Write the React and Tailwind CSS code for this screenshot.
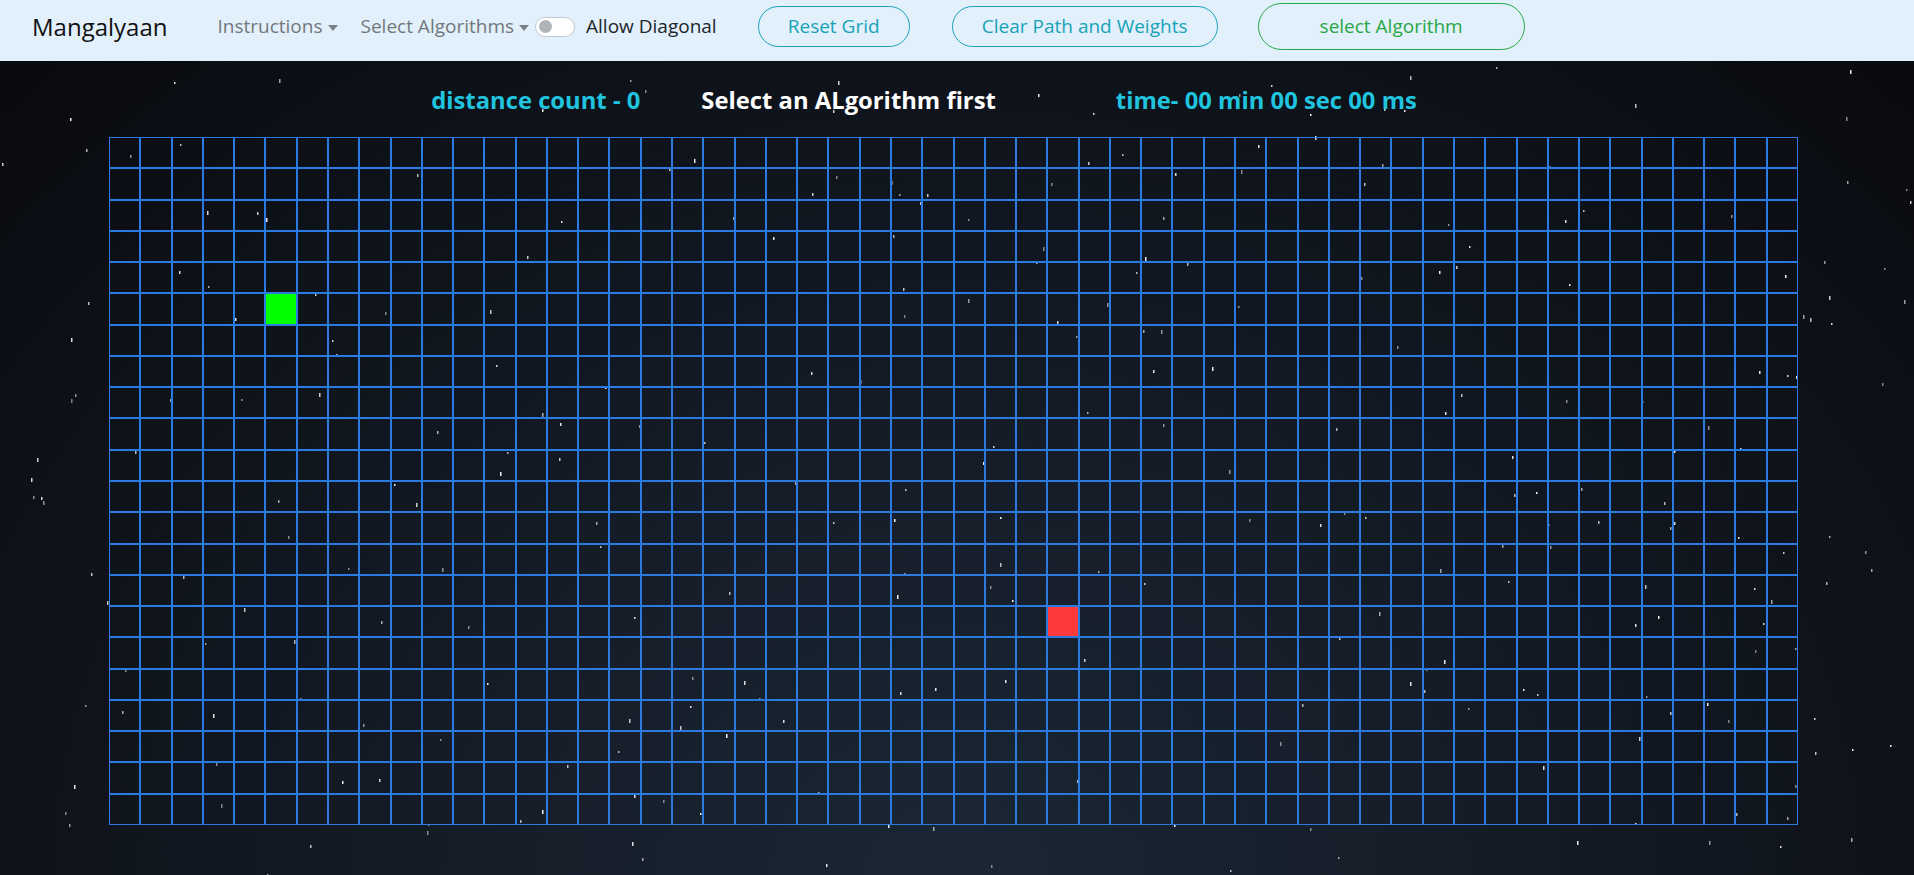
import React from "react";

function mulberry32(a) {
  return function () {
    a |= 0;
    a = (a + 0x6d2b79f5) | 0;
    let t = Math.imul(a ^ (a >>> 15), 1 | a);
    t = (t + Math.imul(t ^ (t >>> 7), 61 | t)) ^ t;
    return ((t ^ (t >>> 14)) >>> 0) / 4294967296;
  };
}

const rand = mulberry32(1234567);
const STARS = Array.from({ length: 290 }, () => ({
  x: Math.round(rand() * 1914),
  y: Math.round(rand() * 814),
  h: 2 + Math.round(rand() * 2),
  o: 0.45 + rand() * 0.5,
}));

const COLS = 54;
const ROWS = 22;
const START = [5, 5];
const END = [15, 30];

function Caret() {
  return (
    <span className="ml-[5px] inline-block h-0 w-0 border-x-[5px] border-t-[6px] border-x-transparent border-t-[#7b8086] translate-y-[1px]" />
  );
}

export default function App() {
  const cells = [];
  for (let r = 0; r < ROWS; r++) {
    for (let c = 0; c < COLS; c++) {
      let bg = "";
      if (r === START[0] && c === START[1]) bg = "bg-[#00ff00]";
      else if (r === END[0] && c === END[1]) bg = "bg-[#fc3a3c]";
      cells.push(
        <div key={r + "-" + c} className={"border border-[#2a7ae2] " + bg} />
      );
    }
  }

  return (
    <div
      className="flex h-[875px] w-full flex-col overflow-hidden"
      style={{ fontFamily: '"Open Sans", "Noto Sans", sans-serif' }}
    >
      <nav className="flex h-[61px] shrink-0 items-center bg-[#e2f0fb] pb-[8px] pl-[32px]">
        <span className="text-[24px] leading-none text-[#111]">Mangalyaan</span>
        <span className="ml-[50px] flex items-center text-[19px] leading-none text-[#72777c]">
          Instructions
          <Caret />
        </span>
        <span className="ml-[23px] flex items-center text-[19px] leading-none text-[#72777c]">
          Select Algorithms
          <Caret />
        </span>
        <span className="ml-[6px] flex h-[20px] w-[40px] items-center rounded-full border border-[#c4c8cc] bg-white pl-[3px]">
          <span className="h-[13px] w-[13px] rounded-full bg-[#b0b4b8]" />
        </span>
        <span className="ml-[11px] text-[19px] leading-none text-[#212529]">Allow Diagonal</span>
        <button className="ml-[41px] flex h-[41px] w-[152px] items-center justify-center rounded-full border border-[#17a2b8] text-[19px] text-[#17a2b8]">
          Reset Grid
        </button>
        <button className="ml-[42px] flex h-[41px] w-[266px] items-center justify-center rounded-full border border-[#17a2b8] text-[19px] text-[#17a2b8]">
          Clear Path and Weights
        </button>
        <button className="ml-[40px] flex h-[47px] w-[267px] items-center justify-center rounded-full border border-[#28a745] text-[19px] text-[#28a745]">
          select Algorithm
        </button>
      </nav>

      <main className="relative flex-1 bg-[radial-gradient(ellipse_at_bottom,#1b2735_0%,#090a0f_100%)]">
        <svg
          className="pointer-events-none absolute inset-0"
          width="1914"
          height="814"
          viewBox="0 0 1914 814"
        >
          {STARS.map((s, i) => (
            <rect key={i} x={s.x} y={s.y} width="1.5" height={s.h} fill="#ffffff" opacity={s.o} />
          ))}
        </svg>

        <div className="relative flex flex-col">
          <div className="flex h-[76px] items-center justify-center pr-[66px] pt-[4px] text-[23.8px] font-bold leading-none">
            <span className="text-[#20c4df]">distance count - 0</span>
            <span className="ml-[61px] text-white">Select an ALgorithm first</span>
            <span className="ml-[120px] text-[#20c4df]">time- 00 min 00 sec 00 ms</span>
          </div>
          <div className="ml-[109px] grid h-[688px] w-[1689px] grid-cols-[repeat(54,minmax(0,1fr))] grid-rows-[repeat(22,minmax(0,1fr))]">
            {cells}
          </div>
        </div>
      </main>
    </div>
  );
}
